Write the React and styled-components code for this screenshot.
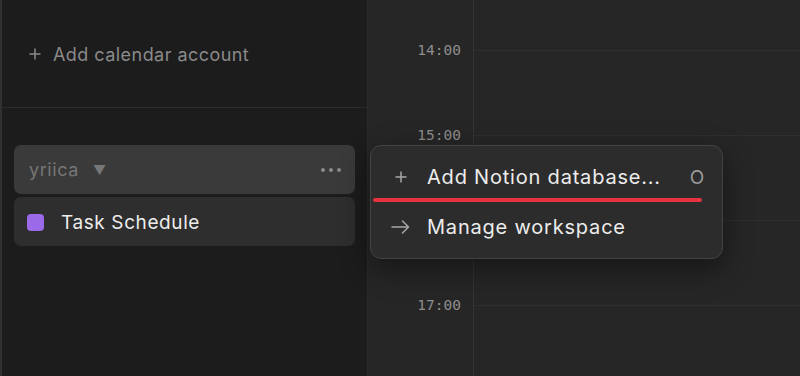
import React from "react";
import styled, { createGlobalStyle } from "styled-components";

const GlobalStyle = createGlobalStyle`
  html, body {
    margin: 0;
    padding: 0;
    background: #1c1c1c;
  }
  body {
    font-family: Inter, "Noto Sans", sans-serif;
    -webkit-font-smoothing: antialiased;
  }
`;

const Screen = styled.div`
  position: relative;
  display: flex;
  width: 800px;
  height: 376px;
  overflow: hidden;
  background: #262626;
`;

const Sidebar = styled.aside`
  display: flex;
  flex-direction: column;
  width: 365px;
  flex-shrink: 0;
  background: #1c1c1c;
  border-left: 2px solid #303030;
  border-right: 1px solid #2a2a2a;
`;

const AccountSection = styled.div`
  display: flex;
  align-items: center;
  height: 108px;
  padding-left: 27px;
  border-bottom: 1px solid #2c2c2c;
  box-sizing: border-box;
`;

const AddAccount = styled.div`
  display: flex;
  align-items: center;
  gap: 12px;
  color: #8a8a8a;
  font-size: 18px;
  letter-spacing: 0.45px;
  margin-top: 1px;
`;

const WorkspaceSection = styled.div`
  display: flex;
  flex-direction: column;
  gap: 3px;
  padding: 37px 12px 0 12px;
`;

const WorkspaceHeader = styled.div`
  display: flex;
  align-items: center;
  height: 49px;
  padding: 0 12px 0 15px;
  border-radius: 7px;
  background: #3a3a3a;
  color: #767676;
  font-size: 18px;
  letter-spacing: 0.6px;
  box-sizing: border-box;
`;

const Caret = styled.span`
  margin-left: 14px;
  font-size: 13px;
  color: #777;
`;

const Dots = styled.div`
  display: flex;
  gap: 4px;
  margin-left: auto;
  margin-right: 2px;

  span {
    width: 4px;
    height: 4px;
    border-radius: 50%;
    background: #8a8a8a;
  }
`;

const DatabaseRow = styled.div`
  display: flex;
  align-items: center;
  gap: 17px;
  height: 49px;
  padding: 2px 0 0 13px;
  border-radius: 7px;
  background: #2e2e2e;
  color: #ececec;
  font-size: 19px;
  letter-spacing: 0.6px;
  box-sizing: border-box;
`;

const Swatch = styled.span`
  width: 17px;
  height: 17px;
  border-radius: 4px;
  background: ${({ color }) => color};
`;

const Calendar = styled.section`
  display: flex;
  flex: 1;
`;

const Gutter = styled.div`
  display: flex;
  flex-direction: column;
  width: 106px;
  padding-top: 41px;
  border-right: 1px solid #333;
  box-sizing: border-box;
`;

const TimeLabel = styled.div`
  height: 85px;
  line-height: 18px;
  padding-right: 12px;
  text-align: right;
  font-family: "DejaVu Sans Mono", "Liberation Mono", monospace;
  font-size: 14.5px;
  color: #8e8e8e;
  flex-shrink: 0;
`;

const Grid = styled.div`
  display: flex;
  flex-direction: column;
  flex: 1;
  padding-top: 50px;
`;

const HourSlot = styled.div`
  height: 85px;
  flex-shrink: 0;
  border-top: 1px solid #2f2f2f;
  box-sizing: border-box;
`;

const Menu = styled.div`
  position: absolute;
  left: 370px;
  top: 145px;
  width: 353px;
  height: 114px;
  padding: 6px 0;
  box-sizing: border-box;
  border-radius: 11px;
  background: #2c2c2c;
  border: 1px solid #434343;
  box-shadow: 0 10px 30px rgba(0, 0, 0, 0.45);
`;

const MenuItem = styled.div`
  position: relative;
  display: flex;
  align-items: center;
  height: 50px;
  padding: 0 17px 0 ${({ $iconPad }) => $iconPad}px;
  color: #ececec;
  font-size: 20px;
  letter-spacing: 0.8px;
`;

const MenuIcon = styled.span`
  display: flex;
  align-items: center;
  justify-content: center;
  width: ${({ $w }) => $w}px;
  margin-right: ${({ $gap }) => $gap}px;
  color: #a8a8a8;
`;

const Shortcut = styled.span`
  margin-left: auto;
  color: #9a9a9a;
  font-size: 19px;
`;

const Highlight = styled.div`
  position: absolute;
  left: 2px;
  top: 46px;
  width: 329px;
  height: 4px;
  border-radius: 2px;
  background: #e8323f;
`;

const PlusIcon = ({ size = 12, color = "currentColor" }) => (
  <svg width={size} height={size} viewBox="0 0 12 12" fill="none">
    <path d="M6 0.5V11.5M0.5 6H11.5" stroke={color} strokeWidth="1.5" />
  </svg>
);

const ArrowIcon = () => (
  <svg width="19" height="14" viewBox="0 0 19 14" fill="none">
    <path
      d="M1 7H17.5M11.5 1L17.5 7L11.5 13"
      stroke="currentColor"
      strokeWidth="1.5"
      strokeLinecap="round"
      strokeLinejoin="round"
    />
  </svg>
);

const hours = ["14:00", "15:00", "16:00", "17:00"];

const App = () => {
  return (
    <>
      <GlobalStyle />
      <Screen>
        <Sidebar>
          <AccountSection>
            <AddAccount>
              <PlusIcon size={12} />
              Add calendar account
            </AddAccount>
          </AccountSection>

          <WorkspaceSection>
            <WorkspaceHeader>
              yriica
              <Caret>▼</Caret>
              <Dots>
                <span />
                <span />
                <span />
              </Dots>
            </WorkspaceHeader>
            <DatabaseRow>
              <Swatch color="#9a6ae8" />
              Task Schedule
            </DatabaseRow>
          </WorkspaceSection>
        </Sidebar>

        <Calendar>
          <Gutter>
            {hours.map((h) => (
              <TimeLabel key={h}>{h}</TimeLabel>
            ))}
          </Gutter>
          <Grid>
            {hours.map((h) => (
              <HourSlot key={h} />
            ))}
          </Grid>
        </Calendar>

        <Menu>
          <MenuItem $iconPad={24}>
            <MenuIcon $w={12} $gap={20}>
              <PlusIcon size={12} />
            </MenuIcon>
            Add Notion database...
            <Shortcut>O</Shortcut>
            <Highlight />
          </MenuItem>
          <MenuItem $iconPad={20}>
            <MenuIcon $w={19} $gap={17}>
              <ArrowIcon />
            </MenuIcon>
            Manage workspace
          </MenuItem>
        </Menu>
      </Screen>
    </>
  );
};

export default App;
